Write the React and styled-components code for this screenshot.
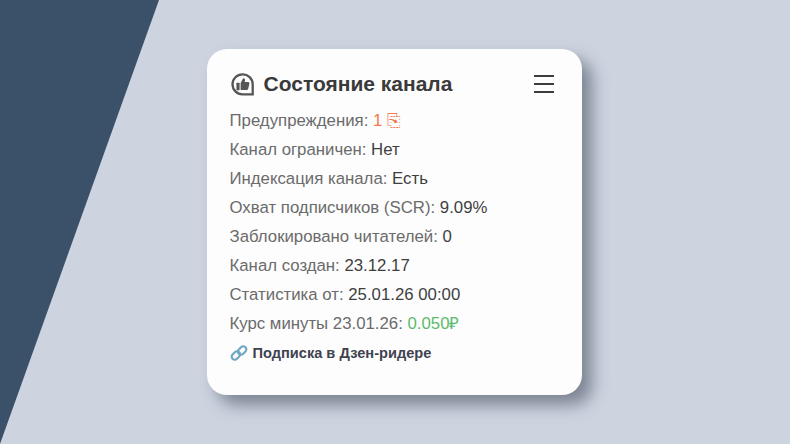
import React from 'react';
import styled, { createGlobalStyle } from 'styled-components';

const GlobalStyle = createGlobalStyle`
	html, body {
		margin: 0;
		padding: 0;
		height: 100%;
	}
	body {
		font-family: 'Liberation Sans', Arial, sans-serif;
	}
`;

const rows = [
	{ label: 'Канал ограничен:', value: 'Нет' },
	{ label: 'Индексация канала:', value: 'Есть' },
	{ label: 'Охват подписчиков (SCR):', value: '9.09%' },
	{ label: 'Заблокировано читателей:', value: '0' },
	{ label: 'Канал создан:', value: '23.12.17' },
	{ label: 'Статистика от:', value: '25.01.26 00:00' },
];

const App = () => (
	<React.Fragment>
		<GlobalStyle />
		<Page>
			<Slant />
			<Card>
				<Header>
					<TitleGroup>
						<BadgeIcon viewBox="0 0 24 24">
							<path
								d="M12 2.2a9.6 9.6 0 1 0 0 19.2h9.8v-9.8A9.6 9.6 0 0 0 12 2.2z"
								fill="none"
								stroke="#555"
								strokeWidth="2.2"
							/>
							<rect x="6.2" y="10.4" width="3" height="7" rx="0.5" fill="#555" />
							<path
								d="M10.2 10.6l2.4-4.6c1.3 0 2 .8 1.8 2.1l-.3 1.6h3.3c.9 0 1.4.7 1.2 1.5l-1.2 5c-.2.6-.7 1-1.3 1h-5.9z"
								fill="#555"
							/>
						</BadgeIcon>
						<Title>Состояние канала</Title>
					</TitleGroup>
					<Burger aria-label="Меню">
						<BurgerLine />
						<BurgerLine />
						<BurgerLine />
					</Burger>
				</Header>
				<List>
					<Row>
						Предупреждения: <Warn>1 <PageGlyph>⎘</PageGlyph></Warn>
					</Row>
					{rows.map(row => (
						<Row key={row.label}>
							{row.label} <Value>{row.value}</Value>
						</Row>
					))}
					<Row>
						Курс минуты 23.01.26: <Rate>0.050₽</Rate>
					</Row>
				</List>
				<Subscribe>
					<LinkIcon viewBox="0 0 18 18">
						<g fill="none" stroke="#6fa8c4" strokeWidth="2.2">
							<rect x="1.2" y="8.4" width="9.4" height="6.2" rx="3.1" transform="rotate(-45 5.9 11.5)" />
							<rect x="7.4" y="3.4" width="9.4" height="6.2" rx="3.1" transform="rotate(-45 12.1 6.5)" />
						</g>
					</LinkIcon>
					<SubscribeText>Подписка в Дзен-ридере</SubscribeText>
				</Subscribe>
			</Card>
		</Page>
	</React.Fragment>
);

export default App;

const Page = styled.div`
	position: relative;
	width: 100%;
	height: 444px;
	overflow: hidden;
	display: flex;
	align-items: center;
	justify-content: center;
	background-color: #cdd4e0;
`;

const Slant = styled.div`
	position: absolute;
	top: 0;
	left: 0;
	width: 160px;
	height: 444px;
	background-color: #3a5169;
	clip-path: polygon(0 0, 159px 0, 0 444px);
`;

const Card = styled.div`
	position: relative;
	box-sizing: border-box;
	width: 375px;
	height: 346px;
	margin-right: 1px;
	padding: 20px 22px 0 22.5px;
	background-color: #fdfdfd;
	border-radius: 20px;
	box-shadow: 10px 10px 16px rgba(60, 68, 84, 0.55);
`;

const Header = styled.div`
	display: flex;
	align-items: center;
	justify-content: space-between;
	height: 30px;
`;

const TitleGroup = styled.div`
	display: flex;
	align-items: center;
	gap: 9px;
`;

const BadgeIcon = styled.svg`
	width: 25px;
	height: 25px;
`;

const Title = styled.div`
	font-size: 21px;
	font-weight: 700;
	color: #3a3a3a;
`;

const Burger = styled.div`
	display: flex;
	flex-direction: column;
	gap: 6.3px;
	width: 20px;
	margin-right: 6px;
`;

const BurgerLine = styled.div`
	height: 2px;
	background-color: #3d3d3d;
`;

const List = styled.div`
	margin-top: 7px;
`;

const Row = styled.div`
	height: 29px;
	line-height: 29px;
	font-size: 16.8px;
	color: #6b6b6b;
	white-space: nowrap;
`;

const Warn = styled.span`
	color: #f4784f;
`;

const PageGlyph = styled.span`
	font-family: 'DejaVu Sans', sans-serif;
	font-size: 16.8px;
`;

const Value = styled.span`
	color: #3f3f3f;
`;

const Rate = styled.span`
	color: #5cba6c;
`;

const Subscribe = styled.div`
	display: flex;
	align-items: center;
	gap: 5px;
	height: 29px;
`;

const LinkIcon = styled.svg`
	width: 18px;
	height: 18px;
`;

const SubscribeText = styled.span`
	font-size: 14.6px;
	font-weight: 700;
	color: #3f4350;
`;
